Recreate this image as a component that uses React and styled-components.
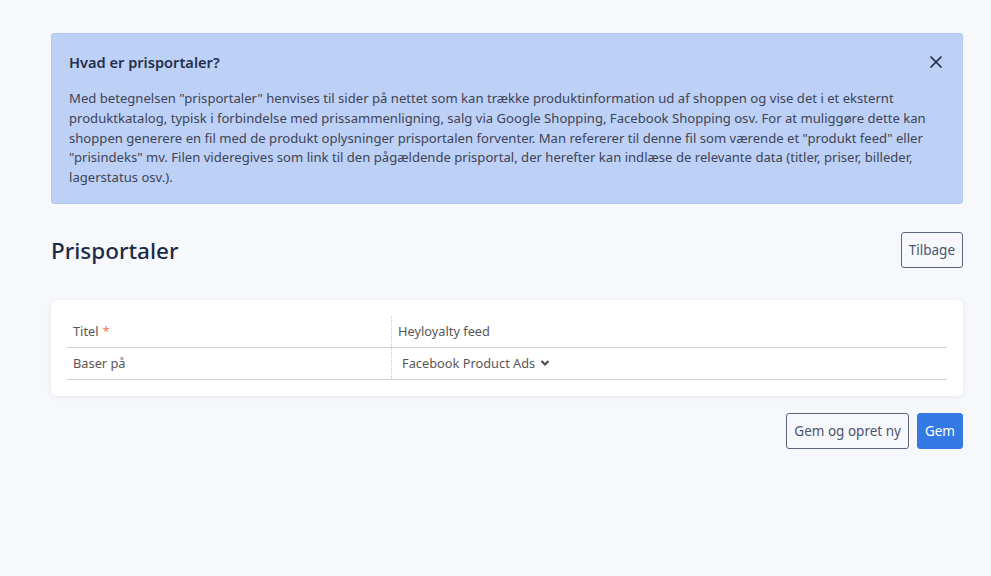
import styled, { createGlobalStyle } from "styled-components"

const GlobalStyle = createGlobalStyle`
    html, body {
        margin: 0;
        padding: 0;
        background-color: #f7f8fb;
        font-family: "Noto Sans", "Open Sans", sans-serif;
    }
    * {
        box-sizing: border-box;
    }
`

export default function App() {
    return (
        <Page>
            <GlobalStyle />
            <Alert>
                <AlertHeader>
                    <AlertTitle>Hvad er prisportaler?</AlertTitle>
                    <CloseButton aria-label="Luk">
                        <svg width="12" height="12" viewBox="0 0 12 12">
                            <path d="M1 1 L11 11 M11 1 L1 11" stroke="#1d2a47" strokeWidth="1.7" strokeLinecap="round" />
                        </svg>
                    </CloseButton>
                </AlertHeader>
                <AlertText>
                    Med betegnelsen "prisportaler" henvises til sider på nettet som kan trække produktinformation ud af shoppen og vise det i et eksternt produktkatalog, typisk i forbindelse med prissammenligning, salg via Google Shopping, Facebook Shopping osv. For at muliggøre dette kan shoppen generere en fil med de produkt oplysninger prisportalen forventer. Man refererer til denne fil som værende et "produkt feed" eller "prisindeks" mv. Filen videregives som link til den pågældende prisportal, der herefter kan indlæse de relevante data (titler, priser, billeder, lagerstatus osv.).
                </AlertText>
            </Alert>

            <HeaderRow>
                <Heading>Prisportaler</Heading>
                <OutlineButton>Tilbage</OutlineButton>
            </HeaderRow>

            <Card>
                <FormTable>
                    <Row>
                        <Label>Titel <Required>*</Required></Label>
                        <Value>Heyloyalty feed</Value>
                    </Row>
                    <Row>
                        <Label>Baser på</Label>
                        <Value $select>
                            Facebook Product Ads
                            <svg width="10" height="8" viewBox="0 0 10 8">
                                <path d="M1.5 2 L5 5.5 L8.5 2" stroke="#4a4a4a" strokeWidth="2.2" fill="none" />
                            </svg>
                        </Value>
                    </Row>
                </FormTable>
            </Card>

            <Actions>
                <OutlineButton>Gem og opret ny</OutlineButton>
                <PrimaryButton>Gem</PrimaryButton>
            </Actions>
        </Page>
    )
}

const Page = styled.div`
    width: 991px;
    min-height: 576px;
    padding: 33px 28px 0 51px;
`

const Alert = styled.div`
    background-color: #bdd0f5;
    border: 1px solid #b3c8f0;
    border-radius: 3px;
    padding: 15px 17px 15px 17px;
    color: #3a4256;
`

const AlertHeader = styled.div`
    display: flex;
    align-items: center;
    justify-content: space-between;
    height: 26px;
`

const AlertTitle = styled.h4`
    margin: 0;
    font-size: 14.6px;
    font-weight: 600;
    color: #24304b;
`

const CloseButton = styled.button`
    border: none;
    background: none;
    padding: 0;
    margin-right: 3px;
    display: flex;
    cursor: pointer;
`

const AlertText = styled.p`
    margin: 14px 0 0 0;
    font-size: 13.1px;
    line-height: 19.8px;
    color: #3d4457;
`

const HeaderRow = styled.div`
    display: flex;
    align-items: center;
    justify-content: space-between;
    margin-top: 28px;
    height: 37px;
    margin-bottom: 31px;
`

const Heading = styled.h1`
    margin: 0;
    font-size: 22.5px;
    font-weight: 500;
    color: #1c2a48;
`

const OutlineButton = styled.button`
    height: 36px;
    padding: 0 7px;
    font-family: inherit;
    font-size: 13.5px;
    color: #4a5470;
    background-color: transparent;
    border: 1px solid #5d6680;
    border-radius: 3px;
    cursor: pointer;
`

const PrimaryButton = styled(OutlineButton)`
    background-color: #3579e4;
    border-color: #3579e4;
    color: #ffffff;
`

const Card = styled.div`
    background-color: #ffffff;
    border-radius: 6px;
    box-shadow: 0 1px 6px rgba(30, 40, 70, 0.08);
    padding: 16px;
`

const FormTable = styled.div`
    display: flex;
    flex-direction: column;
`

const Row = styled.div`
    display: grid;
    grid-template-columns: 324px 1fr;
    border-bottom: 1px solid #d2d2d2;
    height: 32px;
`

const Label = styled.div`
    display: flex;
    align-items: center;
    padding-left: 6px;
    font-size: 12.8px;
    color: #5a5656;
`

const Required = styled.span`
    color: #f0795c;
    margin-left: 4px;
`

const Value = styled.div`
    display: flex;
    align-items: center;
    gap: 5px;
    border-left: 1px dotted #c4c4c4;
    padding-left: ${props => props.$select ? "10px" : "6px"};
    font-size: 12.8px;
    color: #5a5656;
`

const Actions = styled.div`
    display: flex;
    justify-content: flex-end;
    gap: 8px;
    margin-top: 17px;
`
